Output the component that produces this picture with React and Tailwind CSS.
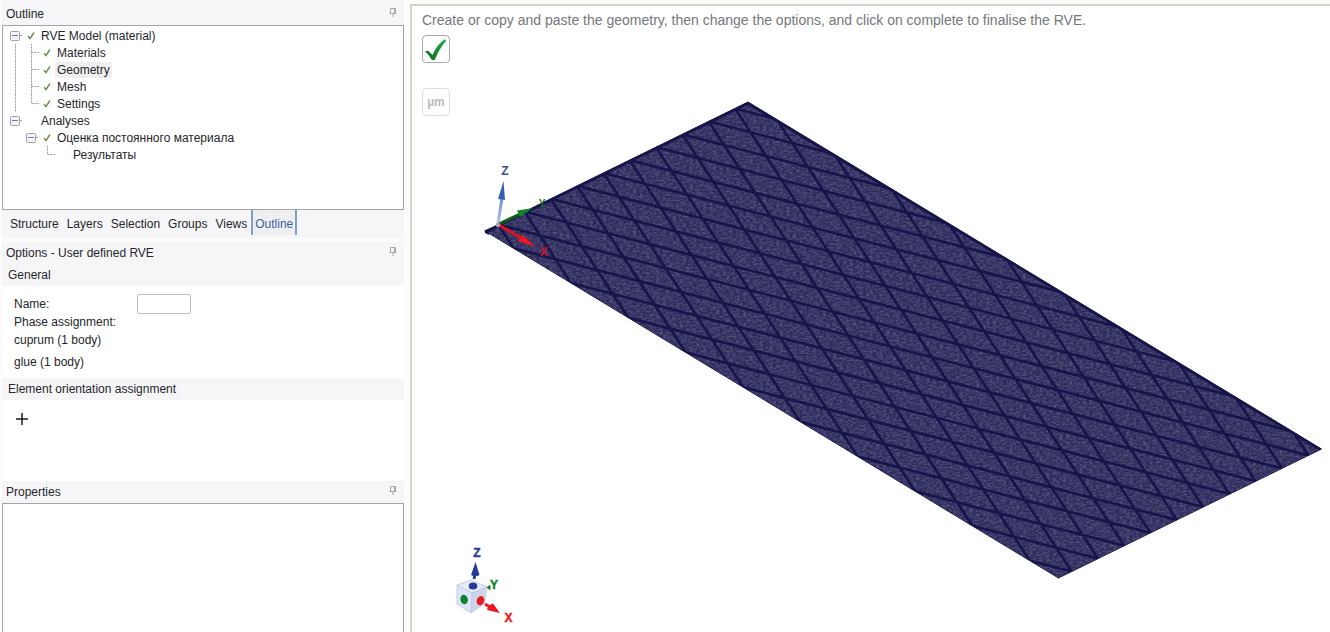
import React from "react";

const cells = {
  blank: null,
  guide: <path d="M8 0V17" />,
  tee: <path d="M8 0V17M8 9H17" />,
  elbow: <path d="M8 0V9H17" />,
};

function Cell({ kind }) {
  return (
    <svg width="16" height="17" viewBox="0 0 16 17" className="shrink-0" aria-hidden="true">
      <g fill="none" stroke="#9a9a9a" strokeDasharray="2 1" transform="translate(.5 -.5)">
        {cells[kind]}
      </g>
      {kind === "toggle" && (
        <g fill="none">
          <path d="M13 8.5h2" stroke="#a5a5a5" />
          <rect x="3.5" y="4.5" width="9" height="9" rx="1" fill="#f4f4f6" stroke="#a3a3a3" />
          <path d="M5 8.5h6" stroke="#6b78b4" />
        </g>
      )}
      {kind === "check" && (
        <path d="M5 9.2 7 11.5 11 5.5" fill="none" stroke="#6a9148" strokeWidth="1.4" />
      )}
    </svg>
  );
}

const tree = [
  { label: "RVE Model (material)", level: 1, cells: ["toggle", "check"] },
  { label: "Materials", level: 2, cells: ["guide", "tee", "check"] },
  { label: "Geometry", level: 2, cells: ["guide", "tee", "check"], selected: true },
  { label: "Mesh", level: 2, cells: ["guide", "tee", "check"] },
  { label: "Settings", level: 2, cells: ["guide", "elbow", "check"] },
  { label: "Analyses", level: 1, cells: ["toggle", "blank"] },
  { label: "Оценка постоянного материала", level: 2, cells: ["blank", "toggle", "check"] },
  { label: "Результаты", level: 3, cells: ["blank", "blank", "elbow", "blank"] },
];

function PinButton({ label }) {
  return (
    <button type="button" aria-label={label} className="flex h-5 w-4 items-start justify-center pt-1">
      <svg width="8" height="9" viewBox="0 0 8 9" fill="none" stroke="#a6a6ab" aria-hidden="true">
        <path d="M1.5 .5H6.5M1.5 .5V5.5M5.5 .5V5.500M6.500 .5V5.500M.5 5.500H7.500M4 6V9" />
      </svg>
    </button>
  );
}

function PanelTitle({ children, pin }) {
  return (
    <div className="flex h-[22px] items-center justify-between pr-[3px] pl-1">
      <h2>{children}</h2>
      <PinButton label={pin} />
    </div>
  );
}

const L = [485, 231];
const D = [573.5, 347];
const W = [263, -129];
const at = (u, v) =>
  `${(L[0] + D[0] * u + W[0] * v).toFixed(1)} ${(L[1] + D[1] * u + W[1] * v).toFixed(1)}`;

const fibres = [];
for (let i = 0; i < 20; i++) {
  const s = 0.05 + i * 0.1;
  fibres.push(`M${at(0, s)}L${at(s, 0)}`);
  fibres.push(`M${at(0, s - 1)}L${at(1, s)}`);
}

function Scene() {
  const outline = `M${at(0, 0)}L${at(0, 1)}L${at(1, 1)}L${at(1, 0)}Z`;
  return (
    <svg
      viewBox="412 6 918 626"
      preserveAspectRatio="xMinYMin meet"
      className="absolute inset-0 h-full w-full"
      role="img"
      aria-label="Woven plate geometry"
    >
      <defs>
        <clipPath id="plate">
          <path d={outline} />
        </clipPath>
        <filter id="grain" x="0" y="0" width="100%" height="100%" colorInterpolationFilters="sRGB">
          <feTurbulence type="fractalNoise" baseFrequency="0.3 0.55" numOctaves="2" seed="4" />
          <feColorMatrix values="0 0 0 0 0.4  0 0 0 0 0.4  0 0 0 0 0.55  1.5 0 0 0 -0.52" />
        </filter>
        <linearGradient id="zshaft" x1="0" y1="0" x2="0" y2="1">
          <stop offset="0" stopColor="#6f8fd0" />
          <stop offset="1" stopColor="#b9c4e4" />
        </linearGradient>
      </defs>
      <path d={outline} fill="#19164c" stroke="#19164c" strokeLinejoin="round" />
      <g clipPath="url(#plate)">
        <path d={outline} fill="#2b2a5b" />
        <rect x="485" y="102" width="837" height="476" filter="url(#grain)" />
        <path d={fibres.join("")} fill="none" stroke="#17144a" strokeWidth="2.6" />
        <path d={`M${at(0, 0)}L${at(0, 1)}L${at(1, 1)}`} fill="none" stroke="#17144a" strokeWidth="5" />
      </g>
      <path d="M484.500 230.500L489 228.500V235L485 233Z" fill="#19164c" />

      <g>
        <path d="M498 224L502 198" stroke="url(#zshaft)" strokeWidth="3" />
        <path d="M503.500 181L498 199L505 200Z" fill="#355fb5" />
        <path d="M499 224L520 214" stroke="#0d5d1c" strokeWidth="3" />
        <path d="M533 208L517 210.500L520 217Z" fill="#128225" />
        <path d="M499 225L523 239" stroke="#dd1220" strokeWidth="3" />
        <path d="M536 247L518 241L522.500 235Z" fill="#ee1620" />
        <circle cx="498" cy="225" r="2.200" fill="#aaa9ae" />
        <g fontFamily="Liberation Sans, sans-serif" fontWeight="bold" fontSize="12" textAnchor="middle">
          <text x="505" y="175" fill="#3a4aa8">Z</text>
          <text x="542" y="207" fill="#137424" fontSize="10">Y</text>
          <text x="544" y="256" fill="#c5122a">X</text>
        </g>
      </g>

      <g>
        <path d="M457 585L471 580L487 587L473 594Z" fill="#e6ecfa" />
        <path d="M457 585L472 593L471 613L457 604Z" fill="#dce5f7" />
        <path d="M472 593L486 587L484 604L471 613Z" fill="#cbd5ee" />
        <path d="M457 585L471 580L487 587L484 604L471 613L457 604ZM457 585L472 593L487 587M472 593L471 613" fill="none" stroke="#b9c3dc" strokeWidth=".8" />
        <ellipse cx="473" cy="586" rx="4.300" ry="3.600" fill="#263a96" />
        <ellipse cx="464" cy="599.500" rx="3.700" ry="4.800" fill="#128032" transform="rotate(-15 464 599)" />
        <ellipse cx="480.500" cy="600.500" rx="3.700" ry="4.700" fill="#ec1820" transform="rotate(20 480 600.500)" />
        <path d="M474 579L475.500 572" stroke="#263a96" strokeWidth="3" />
        <path d="M475.500 562L471 575Q475 577.500 479.500 575Z" fill="#263a96" />
        <path d="M487 587.500L490 585.500L490 589.500Z" fill="#128032" stroke="#128032" />
        <path d="M485 604L490 607" stroke="#ec1820" strokeWidth="3" />
        <path d="M500 613L487 610Q488 605 493 603.500Z" fill="#ec1820" />
        <g fontFamily="Liberation Sans, sans-serif" fontWeight="bold" fontSize="12" textAnchor="middle">
          <text x="477" y="557" fill="#263a96" stroke="#263a96" strokeWidth=".4">Z</text>
          <text x="494" y="589" fill="#128032" stroke="#128032" strokeWidth=".4">Y</text>
          <text x="508.500" y="622" fill="#ec1820" stroke="#ec1820" strokeWidth=".4">X</text>
        </g>
      </g>
    </svg>
  );
}

const tabs = ["Structure", "Layers", "Selection", "Groups", "Views", "Outline"];

export default function App() {
  return (
    <div className="flex min-h-screen bg-[#fcfcfd] pt-1 font-['Liberation_Sans',Arial,sans-serif] text-xs leading-4 text-[#26262b]">
      <aside className="flex w-[404px] shrink-0 flex-col pl-[2px]">
        <section className="-mt-1 bg-[#f6f6f9] pt-[3px]">
          <PanelTitle pin="Pin outline">Outline</PanelTitle>
          <ul role="tree" className="h-[185px] border border-[#a3a3a8] bg-white pt-px pl-1">
            {tree.map((row) => (
              <li
                key={row.label}
                role="treeitem"
                aria-level={row.level}
                aria-selected={!!row.selected}
                className="flex h-[17px] items-center"
              >
                {row.cells.map((kind, i) => (
                  <Cell key={i} kind={kind} />
                ))}
                <span className={row.selected ? "bg-[#efefef] px-[2px]" : "px-[2px]"}>{row.label}</span>
              </li>
            ))}
          </ul>
          <div role="tablist" className="flex h-7 items-start pl-1">
            {tabs.map((t) => (
              <button
                key={t}
                type="button"
                role="tab"
                aria-selected={t === "Outline"}
                className={
                  t === "Outline"
                    ? "h-[25px] border-x-2 border-[#7f9fc6] bg-[#efeff2] px-[2px] pt-[2px] text-[#3e64a0]"
                    : "h-[25px] px-1 pt-[2px]"
                }
              >
                {t}
              </button>
            ))}
          </div>
        </section>

        <section className="mt-1">
          <div className="h-11 bg-[#f6f6f9]">
            <PanelTitle pin="Pin options">Options - User defined RVE</PanelTitle>
            <h3 className="flex h-[22px] items-center pl-[6px]">General</h3>
          </div>
          <div className="bg-white pt-2 pl-3">
            <div className="flex h-5 items-center">
              <label htmlFor="rve-name" className="w-[123px]">Name:</label>
              <input
                id="rve-name"
                type="text"
                className="h-5 w-[54px] rounded-[2px] border border-[#c0c0c3] bg-white px-1 outline-none"
              />
            </div>
            <p className="h-[18px]">Phase assignment:</p>
            <p className="h-[22px]">cuprum (1 body)</p>
            <p className="h-6">glue (1 body)</p>
          </div>
          <h3 className="flex h-[22px] items-center bg-[#f6f6f9] pl-[6px]">Element orientation assignment</h3>
          <div className="h-[81px] bg-white pt-[11px] pl-3">
            <button type="button" aria-label="Add element orientation" className="flex size-4 items-center justify-center">
              <svg width="12" height="12" viewBox="0 0 12 12" stroke="#1c1c1c" strokeWidth="1.500" aria-hidden="true">
                <path d="M6 0V12M0 6H12" />
              </svg>
            </button>
          </div>
        </section>

        <section className="flex grow flex-col">
          <div className="bg-[#f6f6f9]">
            <PanelTitle pin="Pin properties">Properties</PanelTitle>
          </div>
          <div className="grow border-x border-t border-[#a3a3a8] bg-white" />
        </section>
      </aside>

      <main className="relative ml-[6px] grow border-t-2 border-l-2 border-[#d3d2c6] bg-white">
        <Scene />
        <div className="relative flex flex-col items-start pt-1 pl-[10px]">
          <p className="text-sm leading-5 text-[#77777b]">
            Create or copy and paste the geometry, then change the options, and click on complete to finalise the RVE.
          </p>
          <button
            type="button"
            aria-label="Complete"
            className="mt-[5px] flex size-7 items-center justify-center rounded-[4px] border border-[#a9a9ad] bg-white"
          >
            <svg width="24" height="24" viewBox="0 0 24 24" aria-hidden="true">
              <defs>
                <linearGradient id="tick" x1="0" y1="1" x2="1" y2="0">
                  <stop offset="0" stopColor="#0a6a1a" />
                  <stop offset="1" stopColor="#23b04a" />
                </linearGradient>
              </defs>
              <path d="M1 14.500Q3 13 5 14.500L8.500 18Q13 7.500 20.500 2.500Q22.500 2 22 4Q15 12 11 22.500Q9 24 7.500 22.500Q5 17.500 1 14.500Z" fill="url(#tick)" />
            </svg>
          </button>
          <button
            type="button"
            className="mt-[25px] flex size-7 items-center justify-center rounded-[4px] border border-[#dedee0] bg-white text-xs font-bold text-[#b9b9bc]"
          >
            µm
          </button>
        </div>
      </main>
    </div>
  );
}
